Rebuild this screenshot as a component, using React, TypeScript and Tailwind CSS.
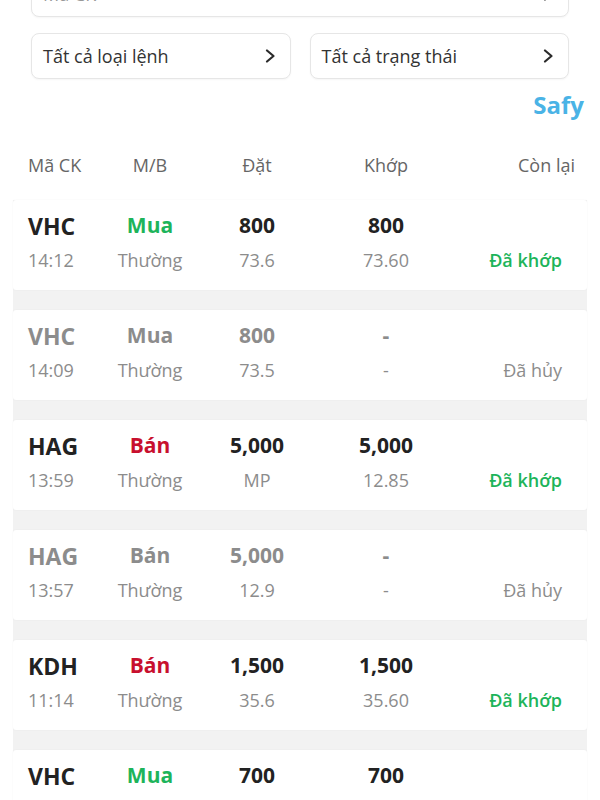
import React from "react";

type Order = {
  code: string;
  side: "Mua" | "Bán";
  time: string;
  qty: string;
  price: string;
  matchedQty: string;
  matchedPrice: string;
  status: "Đã khớp" | "Đã hủy";
};

const orders: Order[] = [
  { code: "VHC", side: "Mua", time: "14:12", qty: "800", price: "73.6", matchedQty: "800", matchedPrice: "73.60", status: "Đã khớp" },
  { code: "VHC", side: "Mua", time: "14:09", qty: "800", price: "73.5", matchedQty: "-", matchedPrice: "-", status: "Đã hủy" },
  { code: "HAG", side: "Bán", time: "13:59", qty: "5,000", price: "MP", matchedQty: "5,000", matchedPrice: "12.85", status: "Đã khớp" },
  { code: "HAG", side: "Bán", time: "13:57", qty: "5,000", price: "12.9", matchedQty: "-", matchedPrice: "-", status: "Đã hủy" },
  { code: "KDH", side: "Bán", time: "11:14", qty: "1,500", price: "35.6", matchedQty: "1,500", matchedPrice: "35.60", status: "Đã khớp" },
  { code: "VHC", side: "Mua", time: "10:41", qty: "700", price: "73.0", matchedQty: "700", matchedPrice: "73.00", status: "Đã khớp" },
];

function Chevron() {
  return (
    <svg width="11" height="14" viewBox="0 0 11 14" fill="none">
      <polyline
        points="2,1.5 8.5,7 2,12.5"
        stroke="#2b2b2b"
        strokeWidth="2.2"
        strokeLinecap="round"
        strokeLinejoin="round"
      />
    </svg>
  );
}

function SelectBox({ label, muted }: { label: string; muted?: boolean }) {
  return (
    <div className="flex h-[46px] flex-1 items-center justify-between rounded-lg border border-[#e6e6e6] bg-white pl-[11px] pr-[14px] shadow-[0_1px_2px_rgba(0,0,0,0.04)]">
      <span className={`text-[18px] ${muted ? "text-[#999]" : "text-[#333]"}`}>{label}</span>
      <Chevron />
    </div>
  );
}

function OrderCard({ order }: { order: Order }) {
  const done = order.status === "Đã khớp";
  const strong = done ? "text-[#222]" : "text-[#8c8c8c]";
  const sideColor = !done
    ? "text-[#8c8c8c]"
    : order.side === "Mua"
      ? "text-[#1db45a]"
      : "text-[#c8102e]";

  return (
    <div className="flex h-[90px] flex-col rounded-[3px] bg-white pl-[15px] pr-[25px] pt-[10px] shadow-[0_0_2px_rgba(0,0,0,0.05)]">
      {/* top line */}
      <div className="flex h-[32px] items-center font-bold">
        <span className={`w-[72px] text-[23px] ${strong}`}>{order.code}</span>
        <span className={`w-[100px] text-center text-[21px] ${sideColor}`}>{order.side}</span>
        <span className={`w-[114px] text-center text-[21px] ${strong}`}>{order.qty}</span>
        <span className={`w-[144px] text-center text-[21px] ${strong}`}>{order.matchedQty}</span>
        <span className="flex-1" />
      </div>
      {/* bottom line */}
      <div className="flex h-[36px] items-center text-[18px] text-[#8c8c8c]">
        <span className="w-[72px]">{order.time}</span>
        <span className="w-[100px] text-center">Thường</span>
        <span className="w-[114px] text-center">{order.price}</span>
        <span className="w-[144px] text-center">{order.matchedPrice}</span>
        <span
          className={`flex-1 text-right ${done ? "font-semibold text-[#1db45a]" : "text-[#8c8c8c]"}`}
        >
          {order.status}
        </span>
      </div>
    </div>
  );
}

export default function App() {
  return (
    <div className="h-[800px] w-[600px] overflow-hidden bg-white font-['Open_Sans',sans-serif]">
      {/* filters (list scrolled a little) */}
      <div className="-mt-[29px] px-[31px]">
        <SelectBox label="Mã CK" muted />
      </div>
      <div className="mt-[16px] flex gap-[19px] px-[31px]">
        <SelectBox label="Tất cả loại lệnh" />
        <SelectBox label="Tất cả trạng thái" />
      </div>

      <div className="flex h-[52px] items-center justify-end pr-[16px]">
        <span className="text-[24px] font-bold text-[#4ab3e6]">Safy</span>
      </div>

      {/* column header */}
      <div className="flex h-[69px] items-center pl-[28px] pr-[25px] text-[18px] text-[#666]">
        <span className="w-[72px]">Mã CK</span>
        <span className="w-[100px] text-center">M/B</span>
        <span className="w-[114px] text-center">Đặt</span>
        <span className="w-[144px] text-center">Khớp</span>
        <span className="flex-1 text-right">Còn lại</span>
      </div>

      <div className="mx-[13px] flex flex-col gap-[20px] bg-[#f2f2f2]">
        {orders.map((o, i) => (
          <OrderCard key={i} order={o} />
        ))}
      </div>
    </div>
  );
}
